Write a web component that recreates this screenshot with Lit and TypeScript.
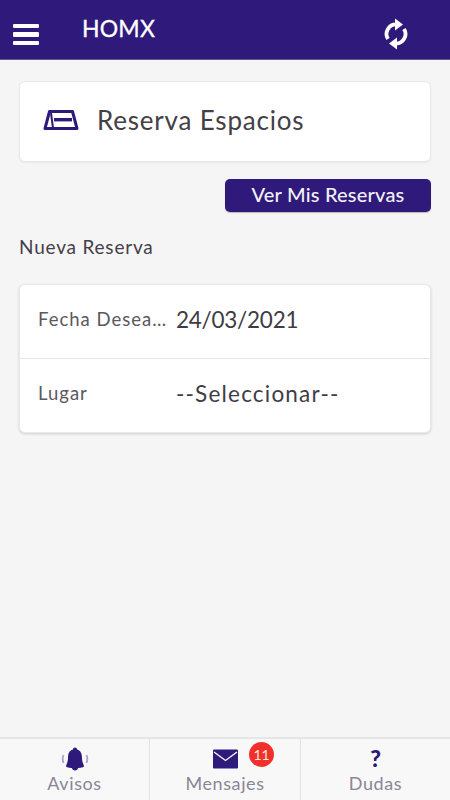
import { LitElement, html, css } from "lit";
import { customElement } from "lit/decorators.js";

@customElement("app-root")
export class AppRoot extends LitElement {
  static styles = css`
    :host {
      display: flex;
      flex-direction: column;
      width: 450px;
      height: 800px;
      background: #f5f5f5;
      font-family: Lato, "Open Sans", sans-serif;
      color: #444048;
      overflow: hidden;
    }
    .header {
      height: 59px;
      flex: none;
      background: #2f1a7c;
      border-bottom: 1px solid #5b5b8c;
      display: flex;
      align-items: center;
      color: #fff;
    }
    .menu {
      margin: 10px 0 0 13px;
      width: 26px;
      display: flex;
      flex-direction: column;
      gap: 4px;
    }
    .menu i {
      display: block;
      height: 4.5px;
      border-radius: 1px;
      background: #fff;
    }
    .brand {
      margin: 0 0 3px 43px;
      font-size: 23px;
      font-weight: 400;
      letter-spacing: 0.2px;
      flex: 1;
      -webkit-text-stroke: 0.3px #fff;
    }
    .sync {
      margin: 9px 41px 0 0;
      display: block;
    }
    .main {
      flex: 1;
      padding: 21px 19px 0 19px;
      display: flex;
      flex-direction: column;
      min-height: 0;
    }
    .card {
      background: #fff;
      border-radius: 6px;
      border: 1px solid #e9e9e9;
      box-shadow: 0 1px 2px rgba(0, 0, 0, 0.06);
    }
    .title {
      height: 81px;
      box-sizing: border-box;
      display: flex;
      align-items: center;
      padding-left: 23px;
      gap: 18px;
      font-size: 26px;
      letter-spacing: 0.8px;
    }
    .title svg {
      display: block;
      margin-top: -3px;
    }
    .title span {
      margin-top: -4px;
    }
    .actions {
      display: flex;
      justify-content: flex-end;
      margin-top: 17px;
    }
    .btn {
      width: 206px;
      height: 33px;
      box-sizing: border-box;
      border-radius: 5px;
      background: #2f1a7c;
      color: #f2f1f6;
      font-size: 20px;
      font-weight: 500;
      text-align: center;
      line-height: 31px;
      letter-spacing: 0.2px;
      box-shadow: 0 1px 1px rgba(0, 0, 0, 0.25);
    }
    .sub {
      margin: 23px 0 0 0;
      font-size: 19px;
      line-height: 24px;
      letter-spacing: 0.8px;
    }
    .form {
      margin-top: 25px;
      display: flex;
      flex-direction: column;
      box-shadow: 0 1px 3px rgba(0, 0, 0, 0.16);
    }
    .row {
      height: 73px;
      box-sizing: border-box;
      padding: 0 0 5px 18px;
      display: flex;
      align-items: center;
    }
    .row + .row {
      height: 74px;
      border-top: 1px solid #e6e6e6;
    }
    .label {
      width: 130px;
      margin-right: 8px;
      font-size: 18.5px;
      letter-spacing: 1px;
      color: #5a5860;
      white-space: nowrap;
      overflow: hidden;
      text-overflow: ellipsis;
    }
    .value {
      font-size: 22.5px;
      letter-spacing: 1.2px;
      color: #3f3c45;
    }
    .value.date {
      letter-spacing: -0.25px;
    }
    .footer {
      flex: none;
      height: 63px;
      box-sizing: border-box;
      border-top: 2px solid #e6e6e6;
      background: #f8f8f8;
      display: grid;
      grid-template-columns: 149px 151px 150px;
    }
    .tab {
      position: relative;
      display: flex;
      flex-direction: column;
      align-items: center;
      color: #8a8696;
      font-size: 18px;
      letter-spacing: 0.6px;
    }
    .tab + .tab {
      border-left: 1px solid #e2e2e2;
    }
    .tab .ic {
      height: 27px;
      margin-top: 5px;
      display: flex;
      align-items: flex-end;
      justify-content: center;
    }
    .tab .lb {
      line-height: 22px;
      margin-top: 1px;
    }
    .env {
      display: block;
      margin-bottom: 2px;
    }
    .q {
      font-size: 23px;
      font-weight: 900;
      line-height: 25px;
      color: #2a1878;
      letter-spacing: 0;
    }
    .badge {
      position: absolute;
      left: 99px;
      top: 3px;
      width: 25px;
      height: 25px;
      border-radius: 50%;
      background: #f0302c;
      color: #fbe6d8;
      font-size: 14px;
      font-weight: 400;
      line-height: 25px;
      text-align: center;
      letter-spacing: 0;
    }
  `;

  render() {
    return html`
      <div class="header">
        <div class="menu"><i></i><i></i><i></i></div>
        <div class="brand">HOMX</div>
        <svg class="sync" width="26" height="32" viewBox="0 0 26 32" fill="none">
          <path d="M5 21 A9.5 9.5 0 0 1 14 6.5" stroke="#fff" stroke-width="3.8" />
          <path d="M12 0.5 L20 6.5 L12 12.5 Z" fill="#fff" />
          <path d="M21 11 A9.5 9.5 0 0 1 12 25.5" stroke="#fff" stroke-width="3.8" />
          <path d="M14 19.5 L6 25.5 L14 31.5 Z" fill="#fff" />
        </svg>
      </div>
      <div class="main">
        <div class="card title">
          <svg width="36" height="20" viewBox="0 0 36 20" fill="none">
            <path d="M6.5 1.5 H29.5 L34 18.5 H2 Z" stroke="#2f1a7c" stroke-width="3" stroke-linejoin="round" />
            <path d="M10 18 L8 3" stroke="#2f1a7c" stroke-width="2" />
            <rect x="11" y="8" width="18" height="3.4" fill="#2f1a7c" />
          </svg>
          <span>Reserva Espacios</span>
        </div>
        <div class="actions"><div class="btn">Ver Mis Reservas</div></div>
        <div class="sub">Nueva Reserva</div>
        <div class="card form">
          <div class="row">
            <div class="label">Fecha Deseada</div>
            <div class="value date">24/03/2021</div>
          </div>
          <div class="row">
            <div class="label">Lugar</div>
            <div class="value">--Seleccionar--</div>
          </div>
        </div>
      </div>
      <div class="footer">
        <div class="tab">
          <div class="ic">
            <svg width="28" height="24" viewBox="0 0 28 24">
              <path d="M14 0.5 C15.5 0.5 16 1.5 16 2.5 C20 3.5 21 7 21 11 C21 15 22.5 17 23 19 C23 20.5 20 21 14 21 C8 21 5 20.5 5 19 C5.5 17 7 15 7 11 C7 7 8 3.5 12 2.5 C12 1.5 12.5 0.5 14 0.5 Z" fill="#2f1a7c" />
              <path d="M11 21 H17 C17 22.5 15.5 23.5 14 23.5 C12.5 23.5 11 22.5 11 21 Z" fill="#2f1a7c" />
              <path d="M2.5 8 C1.5 10.5 1.5 13.5 2.5 16 M25.5 8 C26.5 10.5 26.5 13.5 25.5 16" stroke="#a9a3c9" stroke-width="1.8" fill="none" />
            </svg>
          </div>
          <div class="lb">Avisos</div>
        </div>
        <div class="tab">
          <div class="ic">
            <svg class="env" width="25" height="20" viewBox="0 0 25 20">
              <rect width="25" height="19" y="0.5" rx="1" fill="#2f1a7c" />
              <path d="M1 3 L12.5 11.5 L24 3" stroke="#f4f4f8" stroke-width="1.4" fill="none" />
            </svg>
          </div>
          <div class="lb">Mensajes</div>
          <div class="badge">11</div>
        </div>
        <div class="tab">
          <div class="ic"><span class="q">?</span></div>
          <div class="lb">Dudas</div>
        </div>
      </div>
    `;
  }
}
